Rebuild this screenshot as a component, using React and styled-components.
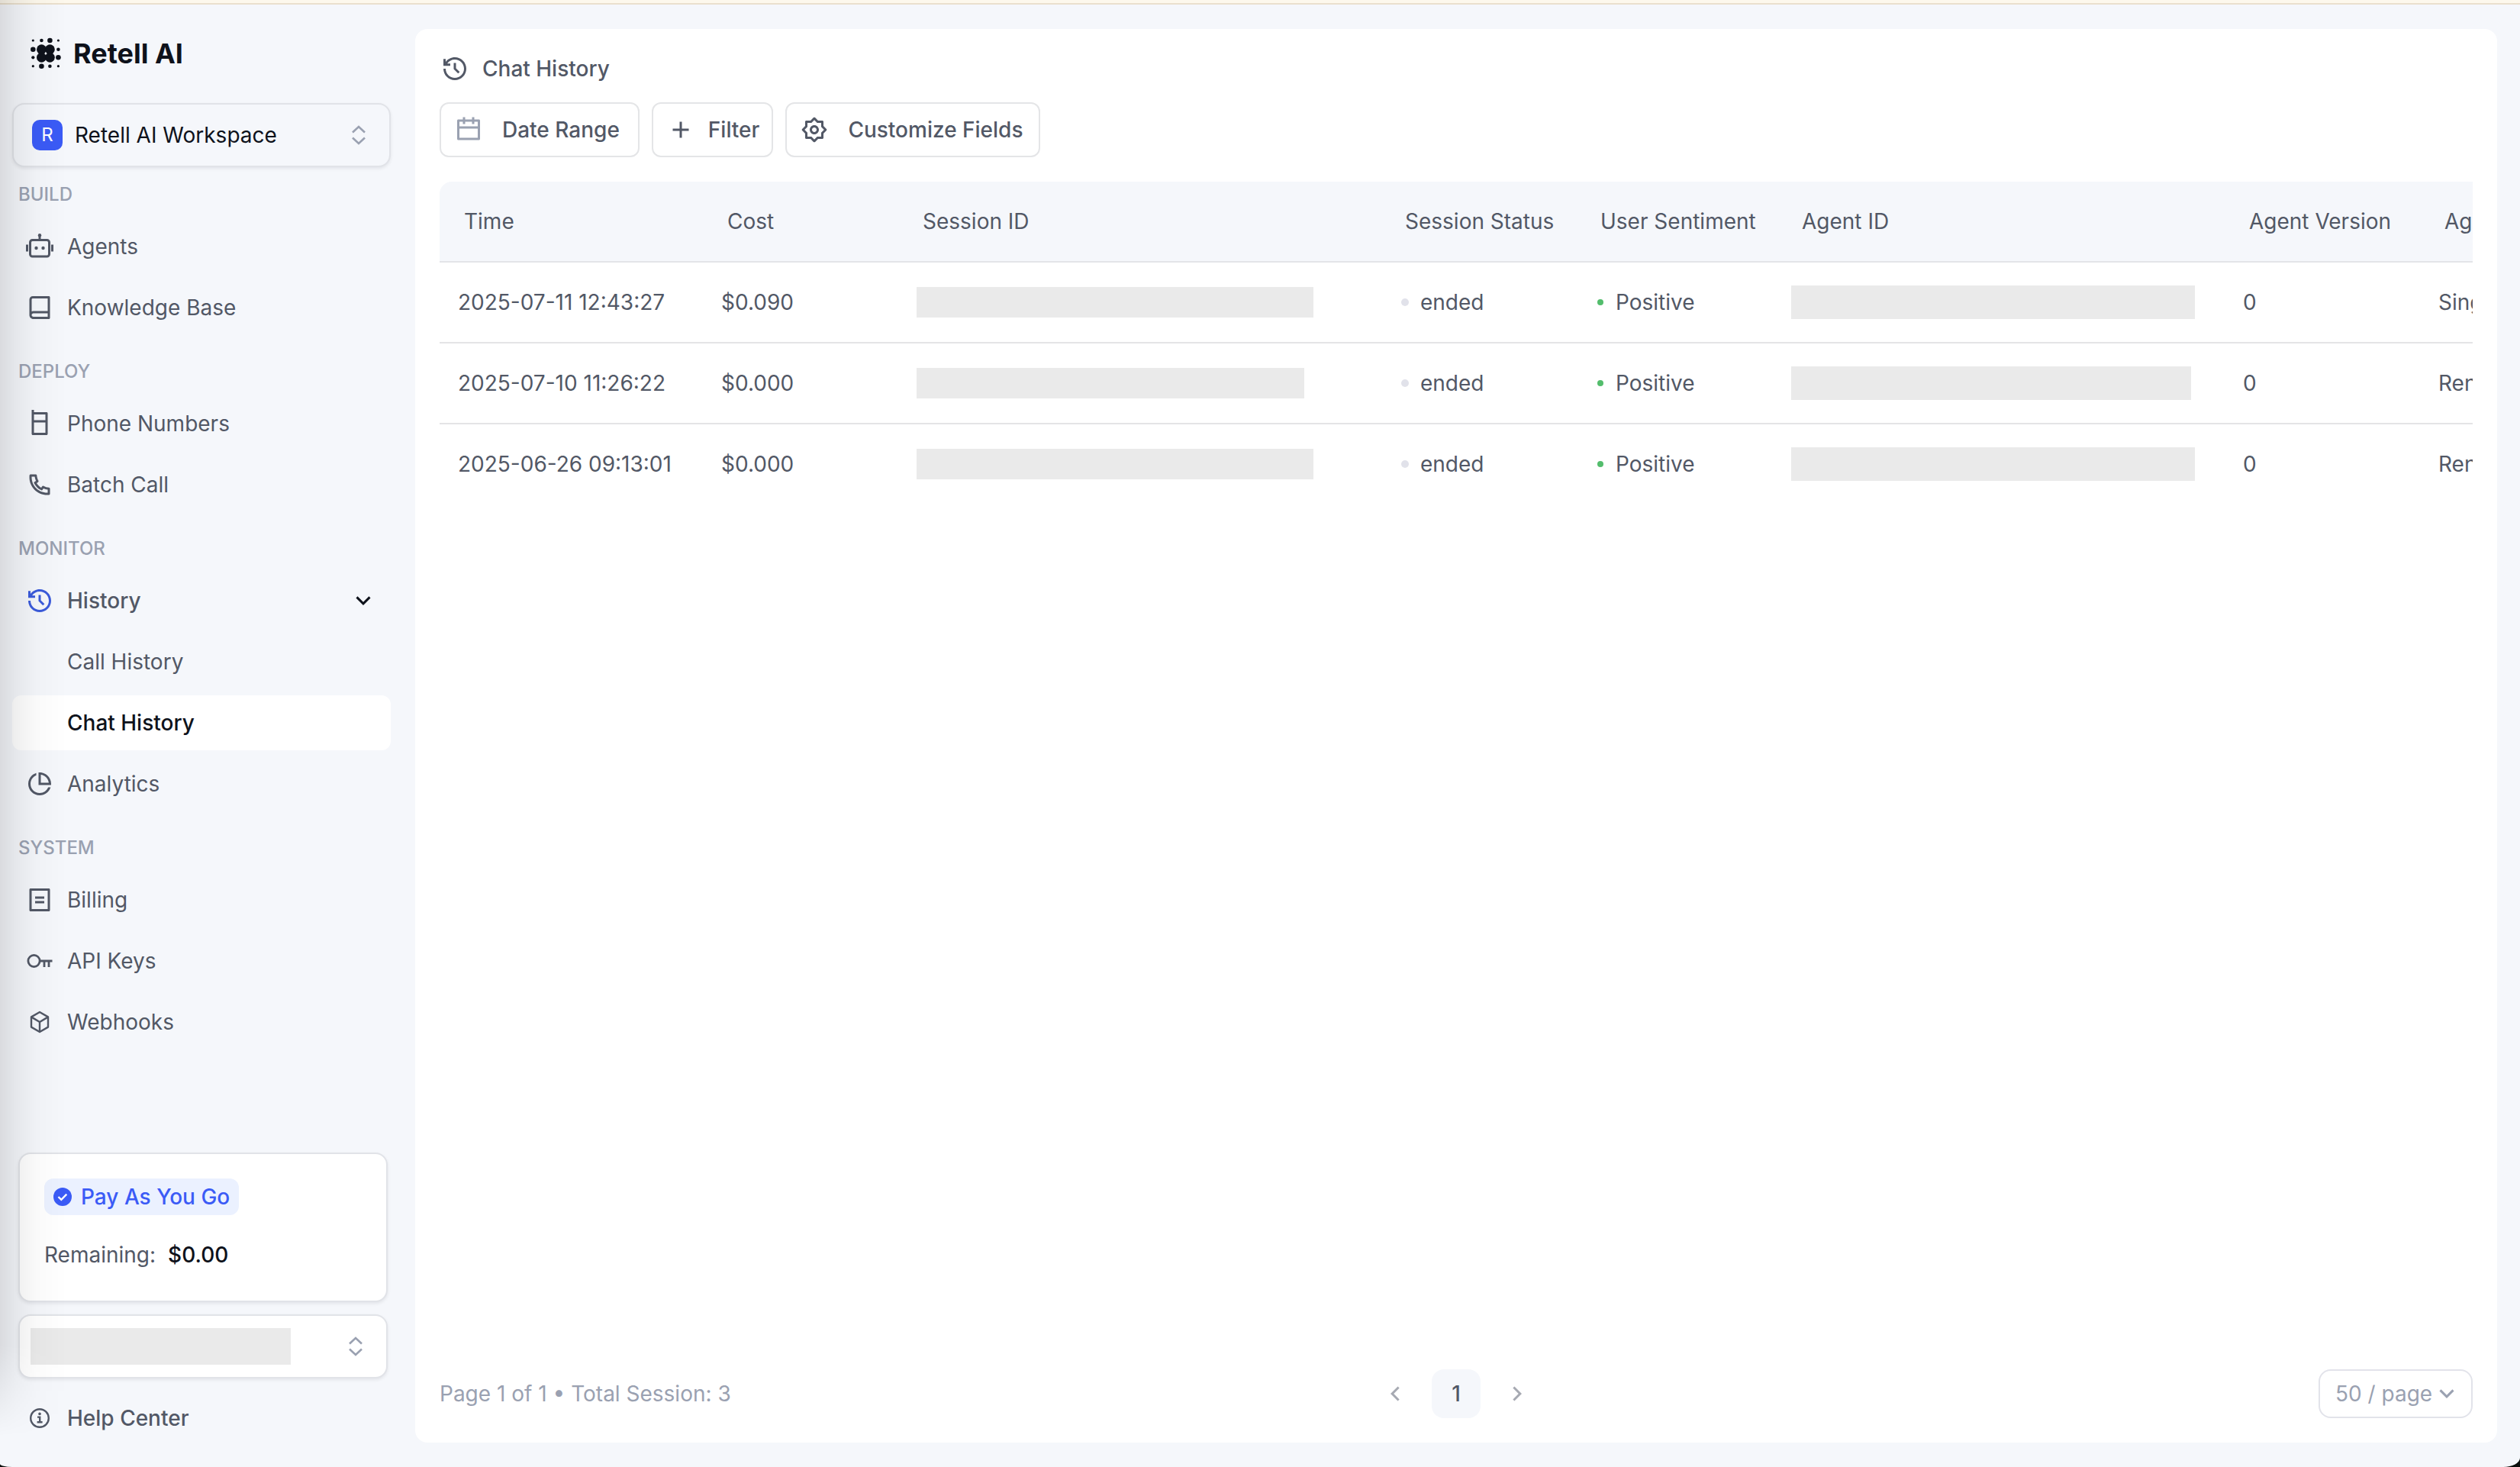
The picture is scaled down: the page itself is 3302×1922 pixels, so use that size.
// App.jsx
import React from 'react';
import styled, { createGlobalStyle } from 'styled-components';
import {
  RiAddLine,
  RiArrowDownSLine,
  RiArrowLeftSLine,
  RiArrowRightSLine,
  RiBillLine,
  RiBookLine,
  RiCalendarLine,
  RiCellphoneLine,
  RiHistoryLine,
  RiPhoneLine,
  RiPieChartLine,
  RiSettings2Line,
} from 'react-icons/ri';

/* ---------- Icons ---------- */

const RobotIcon = () => (
  <svg width="40" height="36" viewBox="0 0 40 36" fill="none" stroke="currentColor" strokeWidth="3">
    <rect x="7.5" y="9.5" width="25" height="21.5" rx="3" />
    <path d="M20 9V4" />
    <circle cx="20" cy="3.2" r="2.2" fill="currentColor" stroke="none" />
    <circle cx="15.5" cy="20" r="2.2" fill="currentColor" stroke="none" />
    <circle cx="24.5" cy="20" r="2.2" fill="currentColor" stroke="none" />
    <path d="M3.5 15.5v9M36.5 15.5v9" />
  </svg>
);

const KeyIcon = () => (
  <svg width="36" height="36" viewBox="0 0 36 36" fill="none" stroke="currentColor" strokeWidth="2.8">
    <circle cx="10.5" cy="18" r="7.6" />
    <path d="M18 18h16.5M24 18v8M30 18v8" />
  </svg>
);

const CubeIcon = () => (
  <svg width="36" height="36" viewBox="0 0 36 36" fill="none" stroke="currentColor" strokeWidth="2.4" strokeLinejoin="round">
    <path d="M18 5l11 6.4v13.2L18 31 7 24.6V11.4z" />
    <path d="M7 11.4l11 6.6 11-6.6M18 18v13" />
  </svg>
);

const InfoIcon = () => (
  <svg width="36" height="36" viewBox="0 0 36 36" fill="none" stroke="currentColor" strokeWidth="2.4">
    <circle cx="18" cy="18" r="11.8" />
    <circle cx="18" cy="12.4" r="1.8" fill="currentColor" stroke="none" />
    <path d="M15 16.6h3.2V23M14.6 23.2h7" />
  </svg>
);

const UpDownIcon = () => (
  <svg width="40" height="36" viewBox="0 0 40 36" fill="none" stroke="#9aa1b1" strokeWidth="2.6">
    <path d="M12 14.5L20 7l8 7.5M12 21.500l8 7.500 8-7.500" />
  </svg>
);

const CheckBadgeIcon = () => (
  <svg width="24" height="24" viewBox="0 0 24 24">
    <circle cx="12" cy="12" r="12" fill="#3b5bf6" />
    <path d="M6.500 12l3.800 3.800 7-7.200" fill="none" stroke="#fff" strokeWidth="2.4" />
  </svg>
);

const logoDots = [
  [3.3, 4, 1.6], [14.4, 4, 2.3], [25.4, 4, 3.3], [36.4, 4, 1.6],
  [3.3, 15.7, 3.3], [14.4, 15.7, 6.4], [25.4, 15.7, 6.4], [36.4, 15.7, 2.3],
  [3.3, 26.3, 2.1], [14.4, 26.3, 6.4], [25.4, 26.3, 6.4], [36.4, 26.3, 3.3],
  [3.3, 37.7, 1.6], [14.4, 37.7, 3.3], [25.4, 37.7, 2.3], [36.4, 37.7, 1.6],
];

const Logo = () => (
  <svg width="40" height="42" viewBox="0 0 40 42" fill="#0e121b">
    {logoDots.map(([cx, cy, r]) => (
      <circle key={`${cx}-${cy}`} cx={cx} cy={cy} r={r} />
    ))}
  </svg>
);

/* ---------- Data ---------- */

const navGroups = [
  {
    label: 'BUILD',
    items: [
      { name: 'Agents', icon: <RobotIcon /> },
      { name: 'Knowledge Base', icon: <RiBookLine /> },
    ],
  },
  {
    label: 'DEPLOY',
    items: [
      { name: 'Phone Numbers', icon: <RiCellphoneLine /> },
      { name: 'Batch Call', icon: <RiPhoneLine /> },
    ],
  },
  {
    label: 'MONITOR',
    items: [
      { name: 'History', icon: <RiHistoryLine color="#3b5bdb" />, medium: true, open: true },
      { name: 'Call History' },
      { name: 'Chat History', medium: true, active: true },
      { name: 'Analytics', icon: <RiPieChartLine /> },
    ],
  },
  {
    label: 'SYSTEM',
    items: [
      { name: 'Billing', icon: <RiBillLine /> },
      { name: 'API Keys', icon: <KeyIcon /> },
      { name: 'Webhooks', icon: <CubeIcon /> },
    ],
  },
];

const columns = [
  { title: 'Time', width: 345 },
  { title: 'Cost', width: 256 },
  { title: 'Session ID', width: 632 },
  { title: 'Session Status', width: 256 },
  { title: 'User Sentiment', width: 264 },
  { title: 'Agent ID', width: 586 },
  { title: 'Agent Version', width: 256 },
  { title: 'Agent Name', width: 344 },
];

const sessions = [
  { time: '2025-07-11 12:43:27', cost: '$0.090', session: 520, agent: 529, version: 0, name: 'Single Prompt' },
  { time: '2025-07-10 11:26:22', cost: '$0.000', session: 508, agent: 524, version: 0, name: 'Rental Agent' },
  { time: '2025-06-26 09:13:01', cost: '$0.000', session: 520, agent: 529, version: 0, name: 'Rental Agent' },
];

const App = () => {
  return (
    <>
      <GlobalStyle />
      <Page>
        <Banner />
        <Layout>
          <Sidebar>
            <Brand>
              <Logo />
              Retell AI
            </Brand>
            <WorkspaceButton type="button">
              <WorkspaceBadge>R</WorkspaceBadge>
              <WorkspaceName>Retell AI Workspace</WorkspaceName>
              <UpDownIcon />
            </WorkspaceButton>

            <nav>
              {navGroups.map((group, index) => (
                <NavGroup key={group.label} $first={index === 0}>
                  <NavLabel>{group.label}</NavLabel>
                  <NavList>
                    {group.items.map((item) => (
                      <li key={item.name}>
                        <NavLink href="#" $medium={item.medium} $active={item.active}>
                          <IconBox>{item.icon}</IconBox>
                          <NavText>{item.name}</NavText>
                          {item.open && (
                            <IconBox>
                              <RiArrowDownSLine color="#0e121b" />
                            </IconBox>
                          )}
                        </NavLink>
                      </li>
                    ))}
                  </NavList>
                </NavGroup>
              ))}
            </nav>

            <SidebarFooter>
              <PlanCard>
                <PlanBadge>
                  <CheckBadgeIcon />
                  Pay As You Go
                </PlanBadge>
                <Balance>
                  Remaining: <strong>$0.00</strong>
                </Balance>
              </PlanCard>
              <AccountButton type="button" aria-label="Account">
                <AccountMask />
                <UpDownIcon />
              </AccountButton>
            </SidebarFooter>
            <NavLink href="#" $medium>
              <IconBox>
                <InfoIcon />
              </IconBox>
              <NavText>Help Center</NavText>
            </NavLink>
          </Sidebar>

          <Panel>
            <Title>
              <IconBox>
                <RiHistoryLine />
              </IconBox>
              Chat History
            </Title>

            <Toolbar>
              <ToolButton type="button" $gap={26} $end={24}>
                <RiCalendarLine color="#9aa1b1" />
                Date Range
              </ToolButton>
              <ToolButton type="button" $gap={18} $end={16}>
                <RiAddLine />
                Filter
              </ToolButton>
              <ToolButton type="button" $gap={26} $end={20}>
                <RiSettings2Line />
                Customize Fields
              </ToolButton>
            </Toolbar>

            <TableWrap>
              <Table>
                <colgroup>
                  {columns.map((column) => (
                    <Col key={column.title} $width={column.width} />
                  ))}
                </colgroup>
                <thead>
                  <tr>
                    {columns.map((column) => (
                      <HeadCell key={column.title}>{column.title}</HeadCell>
                    ))}
                  </tr>
                </thead>
                <tbody>
                  {sessions.map((row) => (
                    <Row key={row.time}>
                      <Cell>{row.time}</Cell>
                      <Cell>{row.cost}</Cell>
                      <Cell>
                        <Mask $width={row.session} $height={40} />
                      </Cell>
                      <Cell>
                        <Status>
                          <Dot $size={10} $color="#e1e2ea" />
                          ended
                        </Status>
                      </Cell>
                      <Cell>
                        <Status>
                          <Dot $size={8} $color="#53bd6c" />
                          Positive
                        </Status>
                      </Cell>
                      <Cell $tight>
                        <Mask $width={row.agent} $height={44} />
                      </Cell>
                      <Cell>{row.version}</Cell>
                      <Cell>{row.name}</Cell>
                    </Row>
                  ))}
                </tbody>
              </Table>
            </TableWrap>

            <Footer>
              <span>Page 1 of 1 • Total Session: 3</span>
              <Pager>
                <PageButton type="button" aria-label="Previous page">
                  <RiArrowLeftSLine />
                </PageButton>
                <PageButton type="button" $current>
                  1
                </PageButton>
                <PageButton type="button" aria-label="Next page">
                  <RiArrowRightSLine />
                </PageButton>
              </Pager>
              <PageSize>
                <PageSizeSelect aria-label="Rows per page" defaultValue="50">
                  <option value="50">50 / page</option>
                </PageSizeSelect>
                <RiArrowDownSLine />
              </PageSize>
            </Footer>
          </Panel>
        </Layout>
        <EdgeShade />
      </Page>
    </>
  );
};

// Styled Components

const GlobalStyle = createGlobalStyle`
  * {
    box-sizing: border-box;
  }

  body {
    margin: 0;
    background: #0b0f0c;
    color: #525866;
    font-family: Inter, 'Liberation Sans', sans-serif;
    font-size: 28px;
    line-height: 40px;
    -webkit-font-smoothing: antialiased;
  }

  button,
  select {
    font: inherit;
    color: inherit;
    cursor: pointer;
  }

  svg {
    flex: none;
  }
`;

const Page = styled.div`
  position: relative; /* Anchor for the edge shade */
  display: flex;
  flex-direction: column;
  min-height: 100vh;
  overflow: hidden;
  background: #f5f7fb;
  border-radius: 0 0 22px 16px / 0 0 12px 4px;
`;

const Banner = styled.div`
  height: 6px;
  background: #fdf8ec;
  border-bottom: 2px solid #eae0cd;
`;

const Layout = styled.div`
  display: flex;
  flex: 1;
`;

const Sidebar = styled.aside`
  display: flex;
  flex-direction: column;
  flex: none;
  width: 544px;
  padding: 32px 32px 28px 16px;
`;

const Brand = styled.div`
  display: flex;
  align-items: center;
  gap: 16px;
  height: 64px;
  margin-bottom: 33px;
  padding-left: 24px;
  color: #0e121b;
  font-size: 36px;
  font-weight: 700;
`;

const SelectorButton = styled.button`
  display: flex;
  align-items: center;
  height: 84px;
  border: 2px solid #e1e3e8;
  border-radius: 16px;
  box-shadow: 0 2px 4px rgba(14, 18, 27, 0.08);
`;

const WorkspaceButton = styled(SelectorButton)`
  flex: none;
  gap: 16px;
  padding: 0 20px 0 24px;
  background: #f5f7fb;
`;

const WorkspaceBadge = styled.span`
  width: 40px;
  height: 40px;
  border-radius: 10px;
  background: #3b5bf6;
  color: #fff;
  font-size: 24px;
`;

const WorkspaceName = styled.span`
  flex: 1;
  color: #0e121b;
  text-align: left;
`;

const NavGroup = styled.section`
  margin-top: ${({ $first }) => ($first ? '20px' : '32px')};
`;

const NavLabel = styled.h2`
  margin: 0 0 16px;
  padding-left: 8px;
  color: #9aa1b1;
  font-size: 24px;
  font-weight: 500;
  line-height: 32px;
`;

const NavList = styled.ul`
  display: flex;
  flex-direction: column;
  gap: 8px;
  margin: 0;
  padding: 0;
  list-style: none;
`;

const NavLink = styled.a`
  display: flex;
  align-items: center;
  gap: 16px;
  height: 72px;
  padding: 0 16px;
  border-radius: 12px;
  background: ${({ $active }) => ($active ? '#fff' : 'transparent')};
  color: ${({ $active }) => ($active ? '#0e121b' : '#525866')};
  font-weight: ${({ $medium }) => ($medium ? 500 : 400)};
  text-decoration: none;
`;

const NavText = styled.span`
  flex: 1;
`;

const IconBox = styled.span`
  display: flex;
  align-items: center;
  justify-content: center;
  flex: none;
  width: 40px;
  height: 40px;
  font-size: 36px;
`;

const SidebarFooter = styled.div`
  display: flex;
  flex-direction: column;
  gap: 16px;
  margin: auto 4px 16px 8px;
`;

const PlanCard = styled.div`
  display: flex;
  flex-direction: column;
  align-items: flex-start;
  gap: 32px;
  padding: 32px 32px 40px;
  background: #fff;
  border: 2px solid #e1e3e8;
  border-radius: 16px;
  box-shadow: 0 2px 4px rgba(14, 18, 27, 0.08);
`;

const PlanBadge = styled.span`
  display: flex;
  align-items: center;
  gap: 12px;
  height: 48px;
  padding: 0 12px;
  border-radius: 12px;
  background: #ebf1ff;
  color: #3b5bf6;
  font-weight: 500;
`;

const Balance = styled.div`
  display: flex;
  gap: 16px;

  strong {
    color: #0e121b;
    font-weight: 500;
  }
`;

const AccountButton = styled(SelectorButton)`
  justify-content: space-between;
  padding: 0 20px 0 14px;
  background: #fff;
`;

const AccountMask = styled.span`
  width: 341px;
  height: 48px;
  background: #eaeaea;
`;

const Panel = styled.main`
  display: flex;
  flex-direction: column;
  flex: 1;
  min-width: 0;
  margin: 32px 30px 32px 0;
  padding: 32px;
  background: #fff;
  border-radius: 16px;
`;

const Title = styled.h1`
  display: flex;
  align-items: center;
  gap: 16px;
  margin: 0 0 24px;
  font-size: 28px;
  font-weight: 500;
  line-height: 40px;
`;

const Toolbar = styled.div`
  display: flex;
  gap: 16px;
  margin-bottom: 32px;
`;

const ToolButton = styled.button`
  display: flex;
  align-items: center;
  gap: ${({ $gap }) => $gap}px;
  height: 72px;
  padding: 0 ${({ $end }) => $end}px 0 18px;
  background: #fff;
  border: 2px solid #e4e5e7;
  border-radius: 12px;
  font-weight: 500;

  svg {
    font-size: 36px;
  }
`;

const TableWrap = styled.div`
  flex: 1;
  overflow: hidden; /* Wide tables are cut at the panel edge */
  border-top-left-radius: 16px;
`;

const Table = styled.table`
  width: 2939px;
  table-layout: fixed;
  border-spacing: 0;
`;

const Col = styled.col`
  width: ${({ $width }) => $width}px;
`;

const HeadCell = styled.th`
  height: 106px;
  padding: 0 32px;
  background: #f5f7fb;
  border-bottom: 2px solid #e3e4e8;
  font-weight: 400;
  text-align: left;
  white-space: nowrap;
`;

const Cell = styled.td`
  height: 106px;
  padding: 0 ${({ $tight }) => ($tight ? '18px' : '24px')};
  border-bottom: 2px solid #e4e4e6;
  white-space: nowrap;
`;

const Row = styled.tr`
  &:last-child ${Cell} {
    border-bottom-color: transparent;
  }
`;

const Mask = styled.div`
  width: ${({ $width }) => $width}px;
  height: ${({ $height }) => $height}px;
  background: #eaeaea;
`;

const Status = styled.span`
  display: flex;
  align-items: center;
  gap: 12px;
`;

const Dot = styled.i`
  display: flex;
  justify-content: center;
  width: 16px;

  &::before {
    content: '';
    width: ${({ $size }) => $size}px;
    height: ${({ $size }) => $size}px;
    border-radius: 50%;
    background: ${({ $color }) => $color};
  }
`;

const Footer = styled.footer`
  display: grid;
  grid-template-columns: 1fr auto 1fr;
  align-items: center;
  color: #9aa1b1;
`;

const Pager = styled.div`
  display: flex;
  gap: 16px;
`;

const PageButton = styled.button`
  display: flex;
  align-items: center;
  justify-content: center;
  width: 64px;
  height: 64px;
  padding: 0;
  border: 0;
  border-radius: 16px;
  background: ${({ $current }) => ($current ? '#f5f7fb' : 'transparent')};
  color: ${({ $current }) => ($current ? '#525866' : '#a6a9b2')};
  font-weight: 500;

  svg {
    font-size: 36px;
  }
`;

const PageSize = styled.div`
  position: relative;
  justify-self: end;

  /* Arrow sits over the select box */
  svg {
    position: absolute;
    top: 14px;
    right: 16px;
    font-size: 36px;
    pointer-events: none;
  }
`;

const PageSizeSelect = styled.select`
  display: block;
  width: 202px;
  height: 64px;
  padding: 0 48px 0 20px;
  appearance: none;
  background: #fff;
  border: 2px solid #e2e3ea;
  border-radius: 16px;
`;

/* Soft shade along the left window edge */
const EdgeShade = styled.div`
  position: absolute;
  top: 0;
  bottom: 0;
  left: 0;
  width: 88px;
  background: linear-gradient(
    90deg,
    rgba(0, 0, 0, 0.11),
    rgba(0, 0, 0, 0.06) 25%,
    rgba(0, 0, 0, 0.02) 55%,
    transparent
  );
  mask-image: linear-gradient(#000 calc(100% - 160px), transparent calc(100% - 40px));
  pointer-events: none;
`;

export default App;
